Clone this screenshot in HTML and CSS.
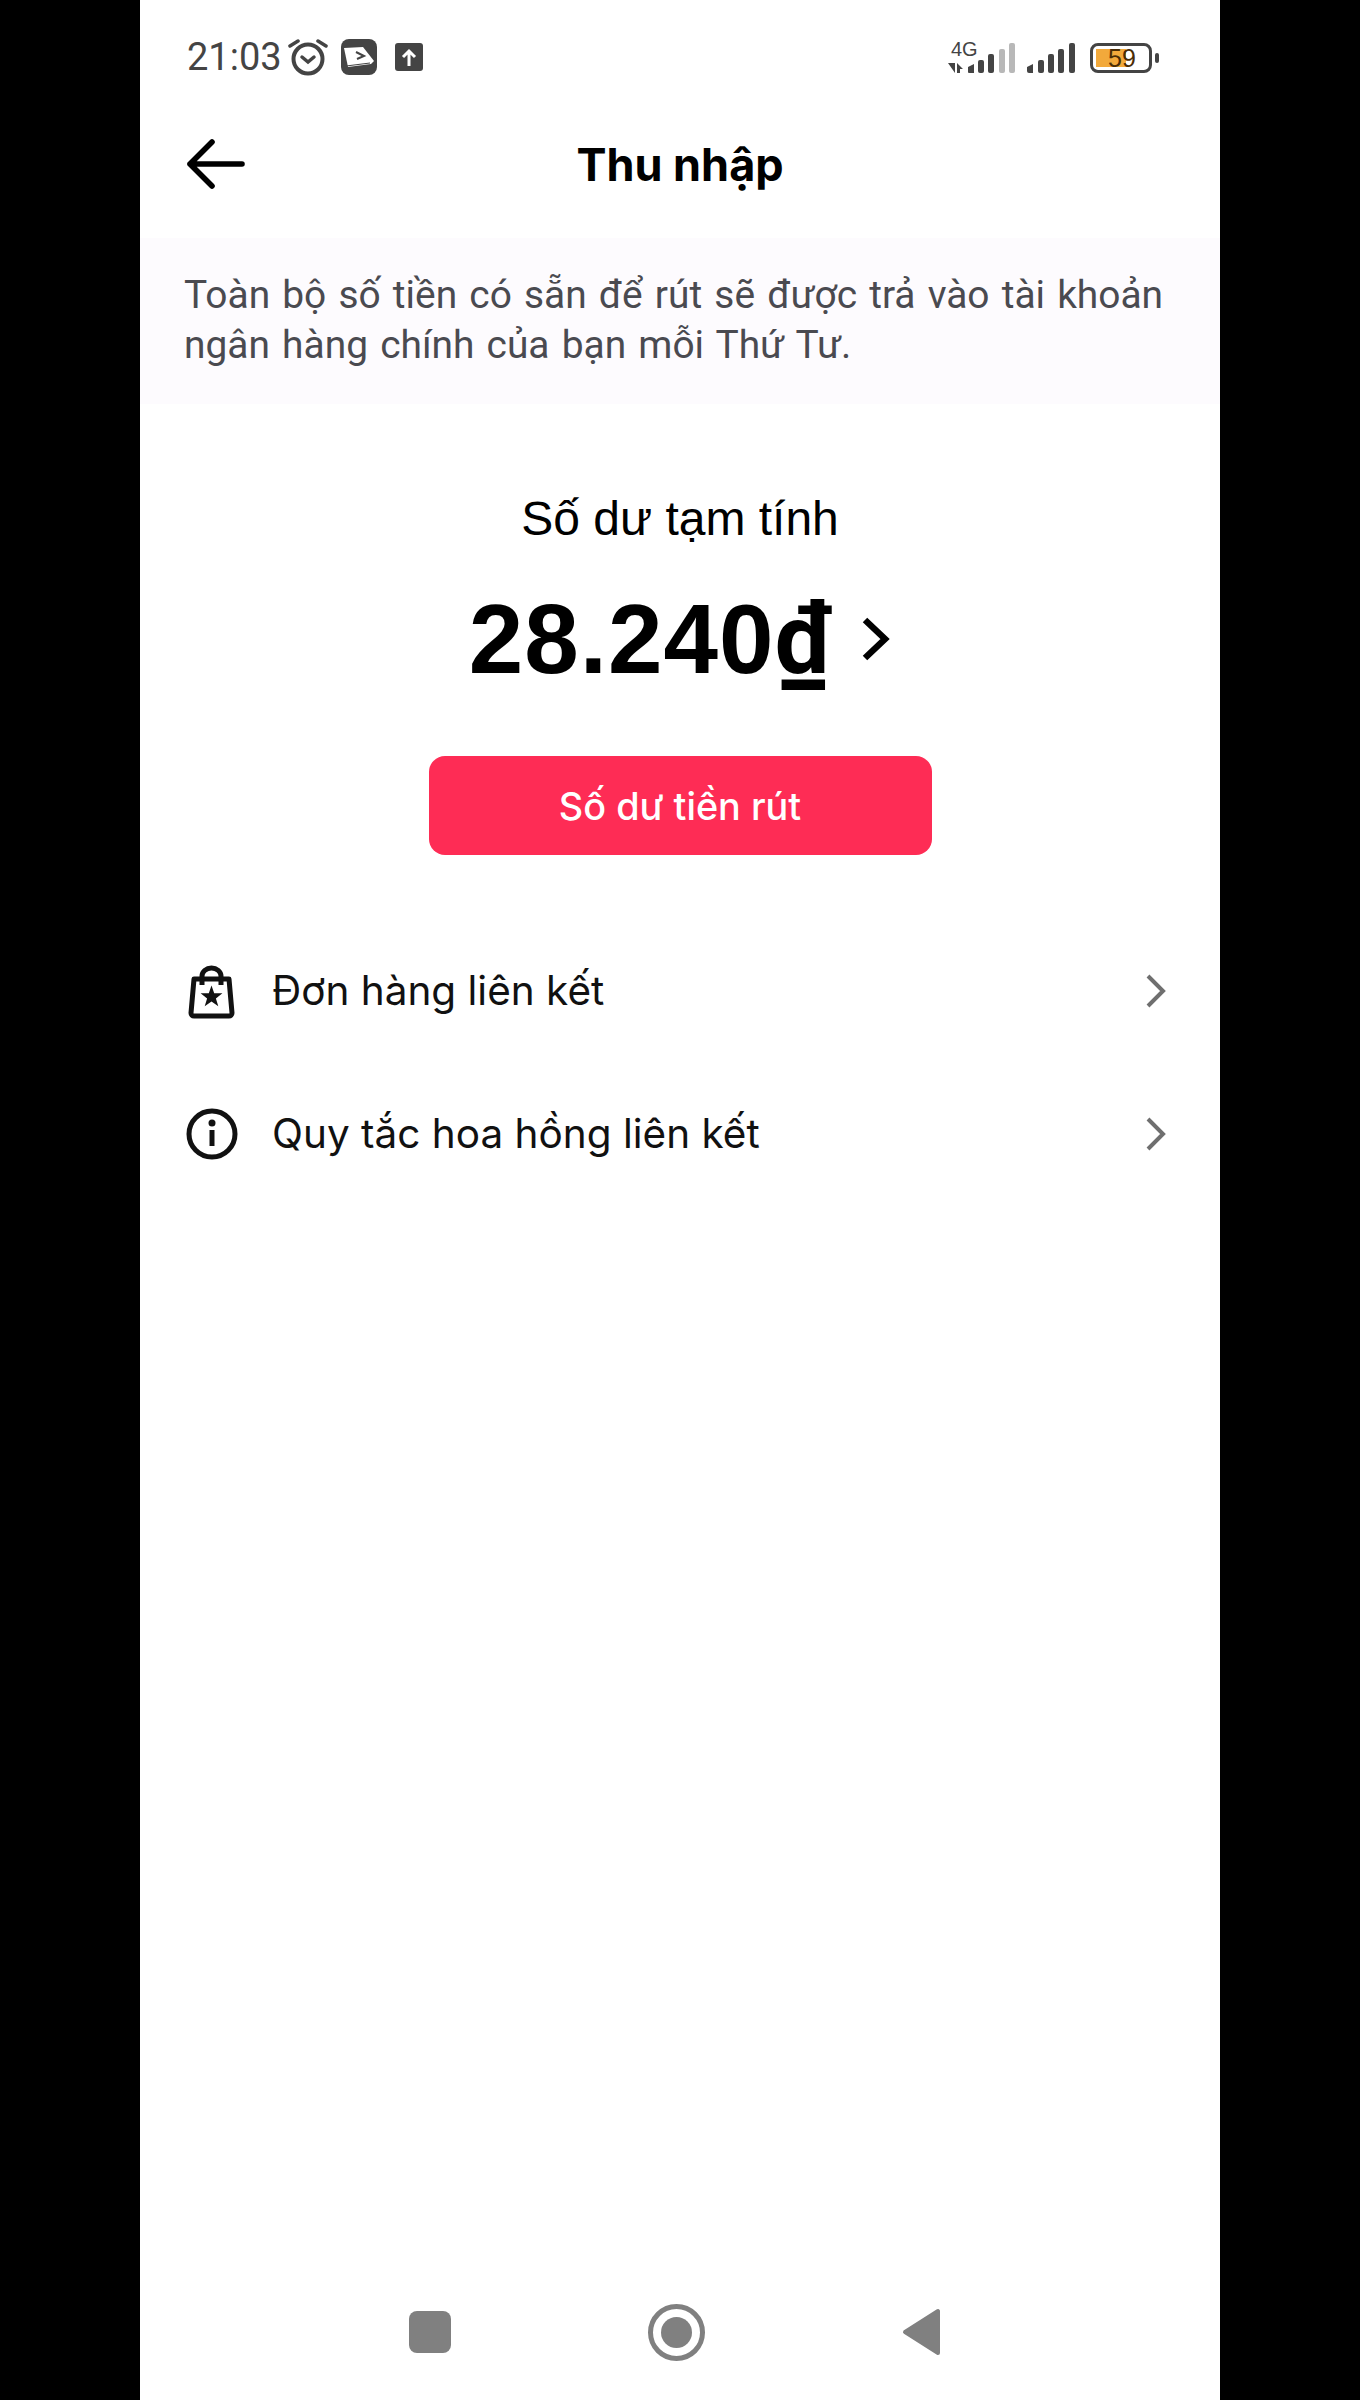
FILE: index.html
```html
<!DOCTYPE html>
<html lang="vi">
<head>
  <meta charset="UTF-8" />
  <meta name="viewport" content="width=device-width, initial-scale=1.0" />
  <title>Thu nhập</title>
  <link rel="stylesheet" href="styles.css">
</head>
<body>
  <div class="phone">

    <div class="status-bar">
      <div class="status-left">
        <span class="clock">21:03</span>
        <svg class="alarm" width="40" height="38" viewBox="0 0 40 38" fill="none" stroke="#444" stroke-linecap="round">
          <circle cx="20" cy="21" r="14.5" stroke-width="4"/>
          <path d="M14 19l6 5 6-5" stroke-width="3.5"/>
          <path d="M2 8l8-5M38 8l-8-5" stroke-width="3.5"/>
        </svg>
        <svg class="app-icon" width="36" height="36" viewBox="0 0 36 36">
          <rect width="36" height="36" rx="8" fill="#444"/>
          <path d="M3 9l19-1 11 14-3 3-23 3z" fill="#fff"/>
          <path d="M5 27l24-3" stroke="#444" stroke-width="1" fill="none"/>
          <path d="M15 13l8 4-7 3" stroke="#444" stroke-width="2" fill="none"/>
        </svg>
        <svg class="upload-icon" width="28" height="28" viewBox="0 0 28 28">
          <rect width="28" height="28" rx="3" fill="#444"/>
          <path d="M14 23V8M8 14l6-6 6 6" stroke="#fff" stroke-width="3" fill="none"/>
        </svg>
      </div>
      <div class="status-right">
        <div class="signal-wrap">
          <span class="net-label">4G</span>
          <svg width="67" height="30" viewBox="0 0 67 30">
            <path d="M0 20h7v10zM9 30V20l6 6h-3v4z" fill="#444"/>
            <path d="M20 24l6-3v9h-5a1 1 0 0 1-1-1z" fill="#444"/>
            <rect x="30" y="17" width="6" height="13" rx="2" fill="#444"/>
            <rect x="40" y="11" width="6" height="19" rx="2" fill="#444"/>
            <rect x="51" y="6" width="6" height="24" rx="2" fill="#b8b8b8"/>
            <rect x="61" y="0" width="6" height="30" rx="2" fill="#b8b8b8"/>
          </svg>
        </div>
        <svg class="signal-two" width="48" height="30" viewBox="0 0 48 30">
          <path d="M0 24l6-3v9H2a2 2 0 0 1-2-2z" fill="#444"/>
          <rect x="11" y="17" width="6" height="13" rx="2" fill="#444"/>
          <rect x="21" y="11" width="6" height="19" rx="2" fill="#444"/>
          <rect x="31" y="6" width="6" height="24" rx="2" fill="#444"/>
          <rect x="42" y="0" width="6" height="30" rx="2" fill="#444"/>
        </svg>
        <div class="battery">
          <div class="battery-fill" style="width: 59%"></div>
          <span class="battery-num">59</span>
        </div>
        <div class="battery-tip"></div>
      </div>
    </div>

    <div class="top-bar">
      <svg class="back" width="60" height="50" viewBox="0 0 60 50" fill="none" stroke="#000" stroke-width="5.6" stroke-linecap="round" stroke-linejoin="round">
        <path d="M56 25H4M26 3L4 25l22 22"/>
      </svg>
      <h1 class="title">Thu nhập</h1>
    </div>

    <div class="notice">Toàn bộ số tiền có sẵn để rút sẽ được trả vào tài khoản ngân hàng chính của bạn mỗi Thứ Tư.</div>

    <div class="balance">
      <div class="balance-label">Số dư tạm tính</div>
      <div class="amount-row">
        <span class="amount">28.240<span class="currency">₫</span></span>
        <svg class="amount-arrow" width="30" height="46" viewBox="0 0 30 46" fill="none" stroke="#000" stroke-width="6.5">
          <path d="M4 4l20 19L4 42"/>
        </svg>
      </div>
      <button class="withdraw">Số dư tiền rút</button>
    </div>

    <div class="menu">
      <div class="menu-row">
        <svg class="menu-icon" width="56" height="56" viewBox="0 0 56 56" fill="none" stroke="#111" stroke-width="5" stroke-linejoin="round">
          <path d="M10 16h35l3 34a3 3 0 0 1-3 3H10a3 3 0 0 1-3-3z"/>
          <path d="M18 22V13a9.5 8 0 0 1 19 0v9"/>
          <path d="M27.5 22.5l2.7 7.8h8.2l-6.5 5.1 2.4 7.9-6.8-4.7-6.8 4.7 2.4-7.9-6.5-5.1h8.2z" fill="#111" stroke="none"/>
        </svg>
        <span class="menu-text">Đơn hàng liên kết</span>
        <svg class="chevron" width="24" height="36" viewBox="0 0 24 36" fill="none" stroke="#6f6f6f" stroke-width="4">
          <path d="M4 3l15 15L4 33"/>
        </svg>
      </div>
      <div class="menu-row">
        <svg class="menu-icon" width="56" height="56" viewBox="0 0 56 56" fill="none" stroke="#111" stroke-width="5">
          <circle cx="28" cy="28" r="23"/>
          <circle cx="28" cy="17" r="3.5" fill="#111" stroke="none"/>
          <path d="M28 24v16"/>
        </svg>
        <span class="menu-text">Quy tắc hoa hồng liên kết</span>
        <svg class="chevron" width="24" height="36" viewBox="0 0 24 36" fill="none" stroke="#6f6f6f" stroke-width="4">
          <path d="M4 3l15 15L4 33"/>
        </svg>
      </div>
    </div>

    <div class="nav-bar">
      <div class="nav-square"></div>
      <div class="nav-circle"><div class="nav-dot"></div></div>
      <svg class="nav-back" width="40" height="48" viewBox="0 0 40 48">
        <path d="M36 3v42L3 24z" fill="#808080" stroke="#808080" stroke-width="4" stroke-linejoin="round"/>
      </svg>
    </div>

  </div>
</body>
</html>
```

FILE: styles.css
```css
* {
  box-sizing: border-box;
}
body {
  margin: 0;
  background: #000;
}
.phone {
  width: 1080px;
  height: 2400px;
  margin-left: 140px;
  background: #fff;
  display: flex;
  flex-direction: column;
}

/* status bar */
.status-bar {
  height: 104px;
  padding: 38px 61px 0 47px;
  display: flex;
  justify-content: space-between;
  align-items: flex-start;
}
.status-left {
  display: flex;
  align-items: center;
  height: 38px;
}
.clock {
  font-family: Roboto, sans-serif;
  font-size: 38px;
  color: #444;
  width: 101px;
}
.alarm {
  margin-right: 13px;
}
.app-icon {
  margin-right: 18px;
}
.status-right {
  display: flex;
  align-items: flex-end;
  height: 35px;
}
.signal-wrap {
  position: relative;
  margin-right: 12px;
}
.signal-wrap svg {
  display: block;
}
.net-label {
  position: absolute;
  left: 3px;
  top: -5px;
  font-family: "Liberation Sans", sans-serif;
  font-size: 20px;
  line-height: 22px;
  color: #444;
}
.signal-two {
  display: block;
  margin-right: 15px;
}
.battery {
  position: relative;
  width: 62px;
  height: 30px;
  border: 3px solid #444;
  border-radius: 8px;
  padding: 3px;
}
.battery-fill {
  height: 100%;
  background: #f2a93b;
}
.battery-num {
  position: absolute;
  left: 15px;
  top: 0;
  font-family: "Liberation Sans", sans-serif;
  font-size: 25px;
  line-height: 25px;
  color: #4a2c05;
}
.battery-tip {
  width: 4px;
  height: 10px;
  margin: 0 0 10px 3px;
  background: #444;
  border-radius: 2px;
}

/* header */
.top-bar {
  position: relative;
  height: 120px;
  margin-bottom: 14px;
  display: flex;
  align-items: center;
  justify-content: center;
}
.back {
  position: absolute;
  left: 46px;
  top: 35px;
}
.title {
  margin: 0;
  font-family: Inter, sans-serif;
  font-size: 45px;
  font-weight: 700;
  color: #000;
}
.notice {
  height: 166px;
  padding: 32px 44px 0;
  background: #fdfbfe;
  font-family: Roboto, sans-serif;
  font-size: 38.9px;
  word-spacing: 2.5px;
  line-height: 50px;
  color: #4a4a50;
}

/* balance */
.balance {
  display: flex;
  flex-direction: column;
  align-items: center;
  padding-top: 87px;
}
.balance-label {
  font-family: "Liberation Sans", sans-serif;
  font-size: 48px;
  line-height: 56px;
  color: #000;
}
.amount-row {
  display: flex;
  align-items: center;
  margin-top: 37px;
  height: 110px;
  gap: 30px;
}
.amount {
  font-family: "Liberation Sans", sans-serif;
  font-size: 98px;
  font-weight: 700;
  letter-spacing: 1px;
  color: #000;
}
.currency {
  font-family: Roboto, sans-serif;
  letter-spacing: 0;
}
.withdraw {
  width: 503px;
  height: 99px;
  margin-top: 62px;
  border: none;
  border-radius: 16px;
  background: #fe2c55;
  color: #fff;
  font-family: Inter, sans-serif;
  font-size: 37.8px;
  font-weight: 550;
}

/* links */
.menu {
  margin-top: 64px;
}
.menu-row {
  height: 143px;
  padding: 0 52px 0 44px;
  display: flex;
  align-items: center;
}
.menu-icon {
  flex-shrink: 0;
}
.menu-text {
  flex: 1;
  margin-left: 32px;
  font-family: Inter, sans-serif;
  font-size: 40.5px;
  color: #111;
}

/* android nav */
.nav-bar {
  margin-top: auto;
  height: 136px;
  padding-left: 269px;
  display: flex;
  align-items: center;
}
.nav-square {
  width: 42px;
  height: 42px;
  background: #808080;
  border-radius: 8px;
}
.nav-circle {
  width: 57px;
  height: 57px;
  margin-left: 197px;
  border: 5px solid #808080;
  border-radius: 50%;
  display: flex;
  align-items: center;
  justify-content: center;
}
.nav-dot {
  width: 31px;
  height: 31px;
  background: #808080;
  border-radius: 50%;
}
.nav-back {
  margin-left: 197px;
}
```
